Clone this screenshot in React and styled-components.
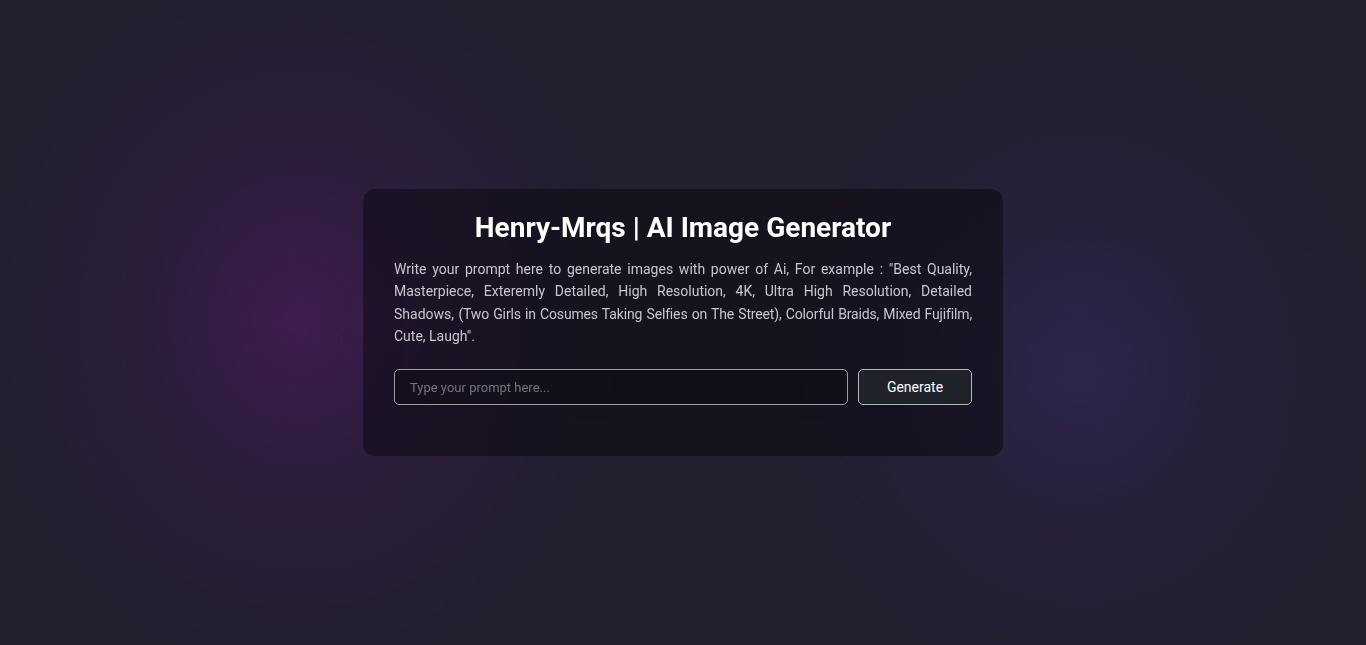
import React from "react";
import styled, { createGlobalStyle } from "styled-components";

const GlobalStyle = createGlobalStyle`
  * { box-sizing: border-box; }
  html, body { margin: 0; padding: 0; height: 100%; }
  body {
    font-family: Roboto, "Noto Sans", Arial, sans-serif;
    background: #221f2f;
  }
  #root { min-height: 100vh; }
`;

const Page = styled.main`
  min-height: 100vh;
  display: flex;
  align-items: center;
  justify-content: center;
  background:
    radial-gradient(ellipse 320px 360px at 300px 320px, rgba(64, 28, 82, 0.95) 0%, rgba(50, 28, 66, 0.6) 45%, rgba(34, 31, 47, 0) 100%),
    radial-gradient(ellipse 300px 330px at 1080px 370px, rgba(46, 38, 78, 0.95) 0%, rgba(40, 34, 64, 0.6) 45%, rgba(34, 31, 47, 0) 100%),
    #221f2f;
`;

const Card = styled.section`
  width: 640px;
  padding: 22px 31px 51px;
  border-radius: 12px;
  background: rgba(0, 0, 0, 0.38);
  backdrop-filter: blur(20px);
  display: flex;
  flex-direction: column;
`;

const Title = styled.h1`
  margin: 0 0 14px;
  font-size: 28px;
  font-weight: 700;
  color: #ffffff;
  text-align: center;
  line-height: 33px;
`;

const Description = styled.p`
  margin: 0 0 22px;
  font-size: 14px;
  line-height: 22.4px;
  color: #c9c5cd;
  text-align: justify;
`;

const Tight = styled.span`
  letter-spacing: -0.15px;
`;

const Form = styled.form`
  display: flex;
  gap: 10px;
`;

const PromptInput = styled.input`
  flex: 1;
  height: 36px;
  padding: 0 15px;
  border: 1px solid #a09ca6;
  border-radius: 5px;
  background: rgba(10, 8, 16, 0.35);
  color: #fff;
  font-family: Roboto, Arial, sans-serif;
  font-size: 13px;
  outline: none;
  &::placeholder { color: #77737d; }
`;

const GenerateButton = styled.button`
  width: 114px;
  height: 36px;
  border: 1px solid #b6b4ba;
  border-radius: 5px;
  background: #1f2229;
  color: #ffffff;
  font-family: Roboto, Arial, sans-serif;
  font-size: 14px;
  font-weight: 400;
  cursor: pointer;
`;

export default function App() {
  return (
    <>
      <GlobalStyle />
      <Page>
        <Card>
          <Title>Henry-Mrqs | AI Image Generator</Title>
          <Description>
            Write your prompt here to generate images with power of Ai, For example : "Best Quality, Masterpiece, Exteremly Detailed, High Resolution, 4K, Ultra High Resolution, Detailed Shadows, <Tight>(Two Girls in Cosumes Taking Selfies on The Street), Colorful Braids, Mixed Fujifilm,</Tight> Cute, Laugh".
          </Description>
          <Form onSubmit={(e) => e.preventDefault()}>
            <PromptInput type="text" placeholder="Type your prompt here..." />
            <GenerateButton type="submit">Generate</GenerateButton>
          </Form>
        </Card>
      </Page>
    </>
  );
}
